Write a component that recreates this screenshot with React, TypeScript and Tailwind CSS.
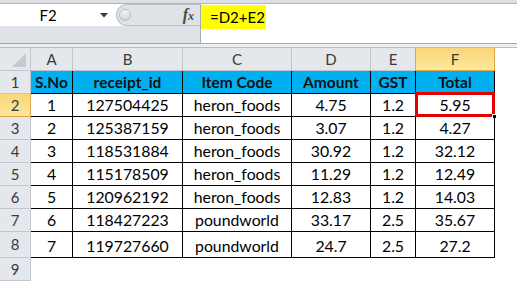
import React from "react";

const cols = ["A", "B", "C", "D", "E", "F"];

const head = ["S.No", "receipt_id", "Item Code", "Amount", "GST", "Total"];

const data: string[][] = [
  ["1", "127504425", "heron_foods", "4.75", "1.2", "5.95"],
  ["2", "125387159", "heron_foods", "3.07", "1.2", "4.27"],
  ["3", "118531884", "heron_foods", "30.92", "1.2", "32.12"],
  ["4", "115178509", "heron_foods", "11.29", "1.2", "12.49"],
  ["5", "120962192", "heron_foods", "12.83", "1.2", "14.03"],
  ["6", "118427223", "poundworld", "33.17", "2.5", "35.67"],
  ["7", "119727660", "poundworld", "24.7", "2.5", "27.2"],
];

const grid = "grid grid-cols-[31px_42px_110px_109px_79px_45px_79px_22px]";

function RowHead({ n, active, h }: { n: number; active?: boolean; h: string }) {
  return (
    <div
      className={`${h} flex items-center justify-center border-r border-b text-[15px] text-[#3a3a3a] ${
        active
          ? "bg-gradient-to-b from-[#f9d57a] to-[#fde99a] border-[#e2a54a]"
          : "bg-[#e4e7ec] border-[#c3c7cd]"
      }`}
    >
      {n}
    </div>
  );
}

export default function App() {
  return (
    <div className="w-[517px] h-[282px] overflow-hidden bg-white font-['Lato',sans-serif] text-black">
      {/* formula bar */}
      <div className="h-[4px] bg-[#dcdfe4] border-b border-[#b1b5bb]" />
      <div className="flex h-[40px] border-b border-[#a3a7ad]">
        <div className="w-[200px] flex flex-col bg-[#dfe3e8]">
          <div className="flex h-[22px] bg-white">
            <div className="w-[116px] flex items-center">
              <span className="w-[96px] text-center text-[15px] leading-none">F2</span>
              <svg width="8" height="5" viewBox="0 0 8 5" className="ml-[4px]">
                <path d="M0 0h8L4 4.5z" fill="#3a3a3a" />
              </svg>
            </div>
            <div className="flex-1 flex items-center bg-[#dfe3e8] rounded-l-full border-l border-y border-[#bcc0c6]">
              <div className="ml-[2px] w-[12px] h-[12px] rounded-full border border-[#b8bcc2] bg-gradient-to-b from-[#f6f7f9] to-[#cfd3d9]" />
              <span className="ml-auto mr-[6px] font-['Liberation_Serif',serif] italic font-bold text-[16px] leading-none text-[#4a4a4a]">
                f<span className="text-[12px]">x</span>
              </span>
            </div>
          </div>
        </div>
        <div className="flex-1 bg-white border-l border-[#a9adb3]">
          <div className="mt-[1px] w-[65px] h-[24px] bg-[#ffff00] flex items-center pl-[9px] text-[15px] leading-none">
            =D2+E2
          </div>
        </div>
      </div>
      <div className="h-[4px] bg-[#eceef1] border-b border-[#b9bdc3]" />

      {/* column headers */}
      <div className={grid}>
        <div className="h-[23px] bg-[#e4e7ec] border-r border-b border-[#c3c7cd] flex items-end justify-end pr-[4px] pb-[3px]">
          <svg width="14" height="14" viewBox="0 0 14 14">
            <path d="M14 0V14H0z" fill="#c6c9ce" />
          </svg>
        </div>
        {cols.map((c) => (
          <div
            key={c}
            className={`h-[23px] flex items-center justify-center border-r border-b text-[15px] text-[#3a3a3a] ${
              c === "F"
                ? "bg-gradient-to-b from-[#f9d57a] to-[#fde99a] border-[#e2a54a]"
                : c === "E"
                ? "bg-[#e4e7ec] border-r-[#e2a54a] border-b-[#c3c7cd]"
                : "bg-[#e4e7ec] border-[#c3c7cd]"
            }`}
          >
            {c}
          </div>
        ))}
        <div className="h-[23px]" />
      </div>

      {/* header row */}
      <div className={grid}>
        <RowHead n={1} h="h-[23px]" />
        {head.map((t) => (
          <div
            key={t}
            className="h-[23px] bg-[#00b0f0] border-r border-b border-black flex items-end justify-center pb-[2px] text-[15.5px] leading-[18px] font-bold text-[#111]"
          >
            {t}
          </div>
        ))}
        <div />
      </div>

      {/* data rows */}
      {data.map((r, i) => {
        const h = i === 6 ? "h-[26px]" : "h-[23px]";
        return (
          <div key={i} className={grid}>
            <RowHead n={i + 2} h={h} active={i === 0} />
            {r.map((v, j) => (
              <div
                key={j}
                className={`${h} relative border-r border-b border-black flex items-end justify-center pb-[2px] text-[15.8px] leading-[18px]`}
              >
                {v}
                {i === 0 && j === 5 && (
                  <>
                    <div className="absolute -left-px -top-[2px] right-[-1px] bottom-[-1px] border-[3px] border-[#e50000]" />
                    <div className="absolute right-[-3px] bottom-[-3px] w-[5px] h-[5px] bg-black border border-white" />
                  </>
                )}
              </div>
            ))}
            <div />
          </div>
        );
      })}

      {/* row 9 */}
      <div className={grid}>
        <RowHead n={9} h="h-[23px]" />
      </div>
    </div>
  );
}
